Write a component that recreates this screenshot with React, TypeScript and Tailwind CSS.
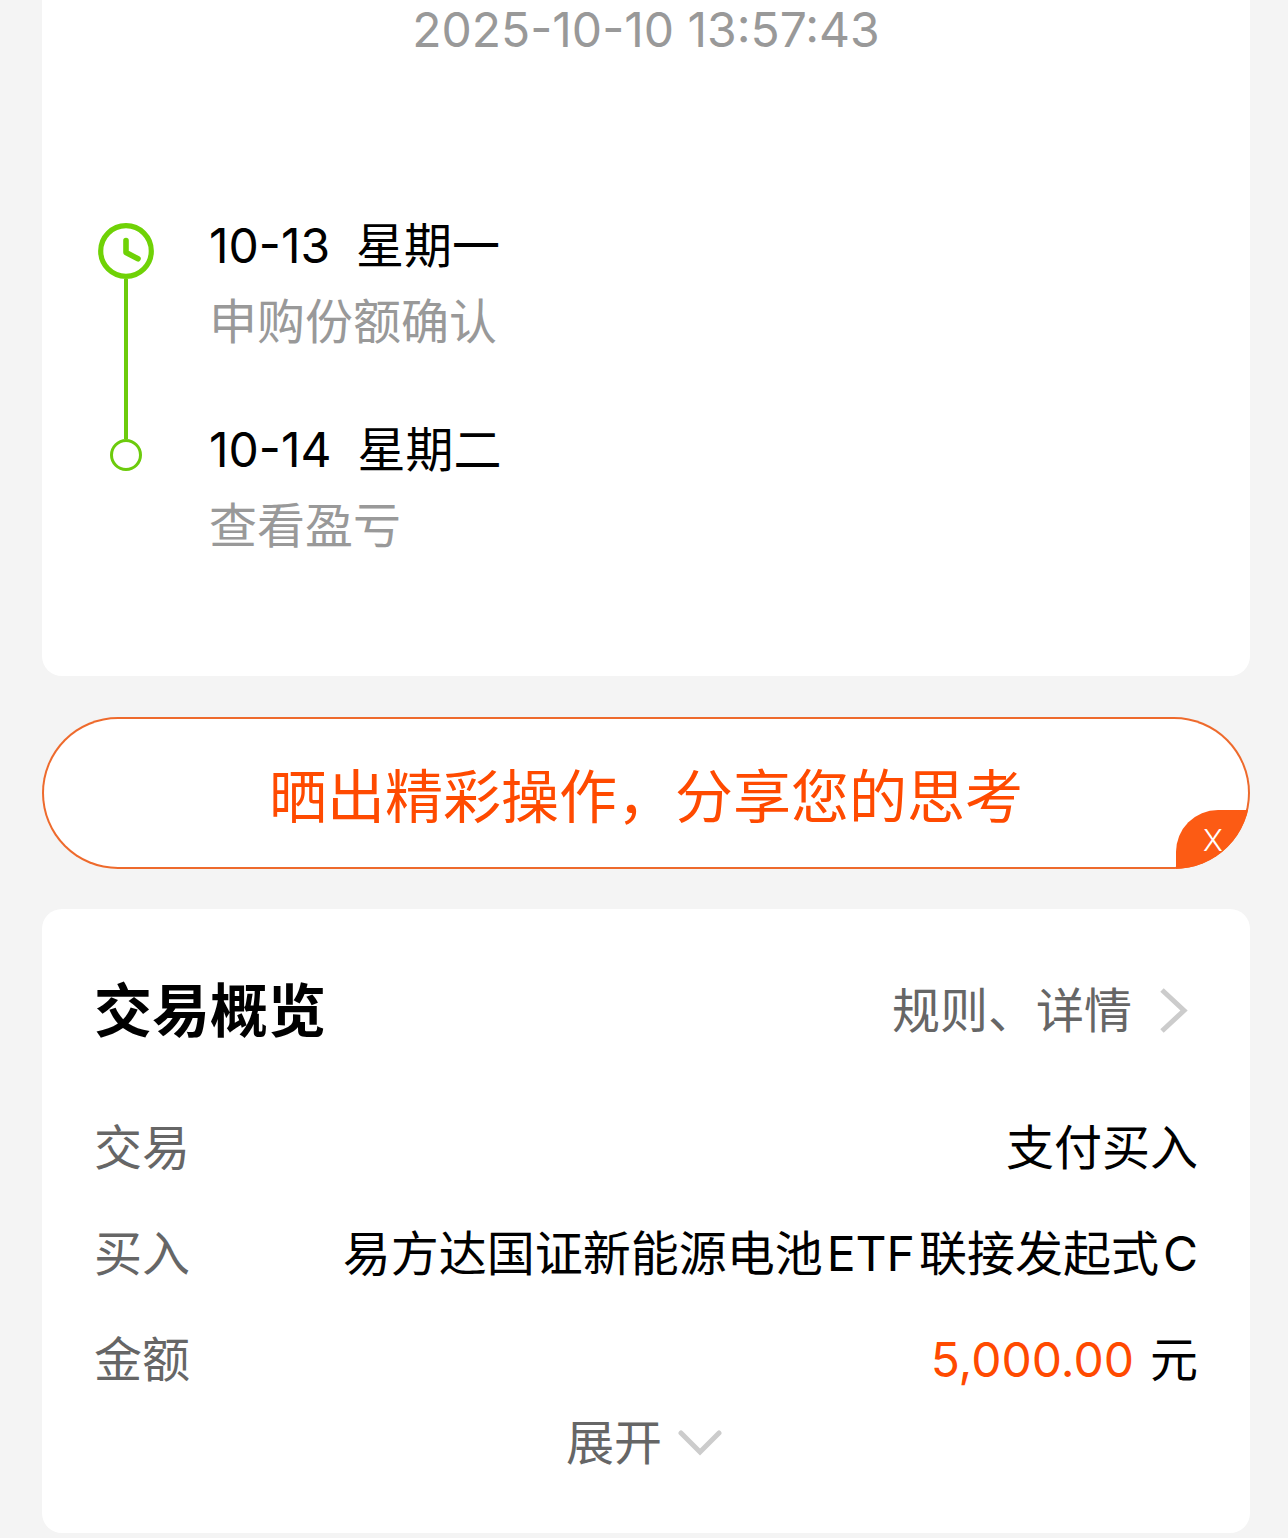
type StepProps = {
	date: string;
	weekday: string;
	note: string;
};

const steps: StepProps[] = [
	{ date: "10-13", weekday: "星期一", note: "申购份额确认" },
	{ date: "10-14", weekday: "星期二", note: "查看盈亏" },
];

function ClockIcon() {
	return (
		<svg className="w-14 h-14" viewBox="0 0 56 56" fill="none" stroke="#6fd206">
			<circle cx="28" cy="28" r="25.3" strokeWidth="5.2" />
			<path d="M28 17.5v12l12 6.3" strokeWidth="5.6" strokeLinecap="round" strokeLinejoin="round" />
		</svg>
	);
}

function Step({ date, weekday, note }: StepProps) {
	return (
		<div className="h-51">
			<p className="flex gap-[26px] leading-[76px] text-black">
				<span>{date}</span>
				<span>{weekday}</span>
			</p>
			<p className="leading-[76px] text-[#999999]">{note}</p>
		</div>
	);
}

export default function App() {
	return (
		<main className="min-h-screen bg-[#f4f4f4] pl-[42px] pr-[38px] pb-1 font-[Inter,'Noto_Sans_CJK_SC',sans-serif] text-[48px]">
			<section className="rounded-b-[20px] bg-white px-14 pb-[60px]">
				<time className="block text-center leading-15 text-[#999999]">2025-10-10 13:57:43</time>
				<div className="flex gap-[55px] pt-[148px]">
					<div className="flex w-14 flex-col items-center pt-[15px]">
						<ClockIcon />
						<div className="h-40 w-1 bg-[#6ccb0c]" />
						<div className="h-8 w-8 rounded-full border-[3px] border-[#6ccb0c]" />
					</div>
					<div>
						{steps.map((step) => (
							<Step key={step.date} {...step} />
						))}
					</div>
				</div>
			</section>

			<div className="relative mt-[41px] overflow-hidden rounded-[76px] bg-[#ee6a2c] p-[2px]">
				<button
					type="button"
					className="block w-full rounded-[74px] bg-white pt-2 text-center text-[58px] leading-[140px] text-[#ff4a00]"
				>
					晒出精彩操作，分享您的思考
				</button>
				<button
					type="button"
					className="absolute right-0 bottom-0 h-[59px] w-[74px] rounded-tl-[42px] bg-[#fc5b14] text-[30px] leading-[56px] font-light text-white"
				>
					X
				</button>
			</div>

			<section className="mt-10 rounded-[20px] bg-white px-[52px] pt-[62px] pb-15 text-[#666666]">
				<div className="flex items-center justify-between">
					<h2 className="text-[58px] leading-20 font-bold text-black">交易概览</h2>
					<a href="#rules" className="flex items-center gap-7 pr-[10px]">
						规则、详情
						<svg className="w-7 h-12" viewBox="0 0 28 48" fill="none" stroke="#cccccc" strokeWidth="5">
							<path d="M2 3l22 20.5L2 44" />
						</svg>
					</a>
				</div>
				<dl className="mt-11 leading-[106px]">
					<div className="flex justify-between">
						<dt>交易</dt>
						<dd className="text-black">支付买入</dd>
					</div>
					<div className="flex justify-between">
						<dt>买入</dt>
						<dd className="text-black">
							易方达国证新能源电池<span className="mx-1">ETF</span>联接发起式<span className="ml-1">C</span>
						</dd>
					</div>
					<div className="flex justify-between">
						<dt>金额</dt>
						<dd className="flex gap-4 text-black">
							<span className="text-[#ff4a00]">5,000.00</span>元
						</dd>
					</div>
				</dl>
				<button type="button" className="mx-auto flex items-center gap-4 pr-1 leading-15">
					展开
					<svg
						className="w-11 h-7"
						viewBox="0 0 44 28"
						fill="none"
						stroke="#cccccc"
						strokeWidth="5"
						strokeLinecap="round"
					>
						<path d="M3 4l19 19L41 4" />
					</svg>
				</button>
			</section>
		</main>
	);
}
